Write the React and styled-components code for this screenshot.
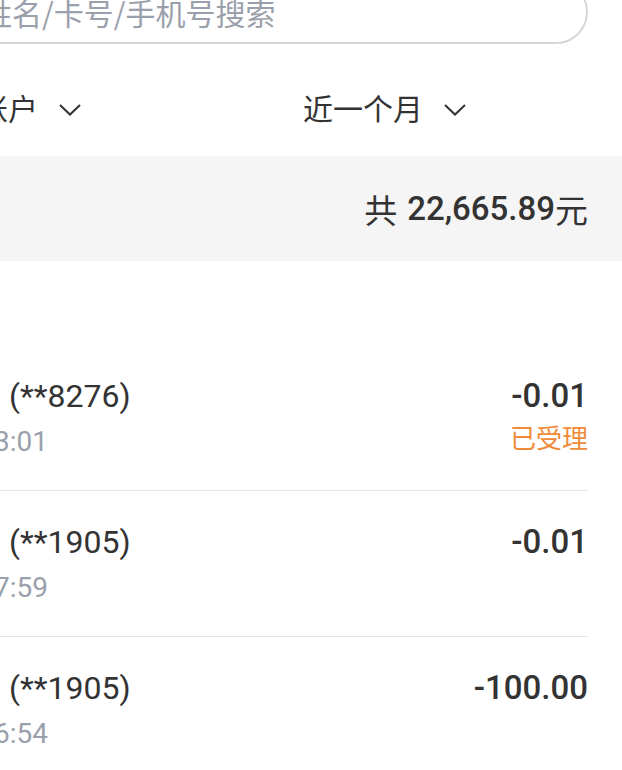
import React from "react";
import styled, { createGlobalStyle } from "styled-components";

const records = [
  { id: 1, bank: "建设银行", tail: "8276", time: "今天 14:23:01", amount: "-0.01", status: "已受理" },
  { id: 2, bank: "建设银行", tail: "1905", time: "昨天 09:17:59", amount: "-0.01" },
  { id: 3, bank: "建设银行", tail: "1905", time: "昨天 08:06:54", amount: "-100.00" },
];

const Chevron = () => (
  <ChevronIcon width="22" height="12" viewBox="0 0 22 12">
    <polyline points="1,1 11,10.5 21,1" fill="none" stroke="#333" strokeWidth="2" />
  </ChevronIcon>
);

const App = () => {
  return (
    <>
      <GlobalStyle />
      <Page>
        <SearchBox>
          <svg width="24" height="24" viewBox="0 0 24 24">
            <circle cx="10.5" cy="10.5" r="7.5" fill="none" stroke="#9aa0ab" strokeWidth="2" />
            <line x1="16" y1="16" x2="22" y2="22" stroke="#9aa0ab" strokeWidth="2" />
          </svg>
          <SearchInput placeholder="按姓名/卡号/手机号搜索" />
        </SearchBox>

        <FilterBar>
          <Filter>
            全部账户
            <Chevron />
          </Filter>
          <Filter>
            近一个月
            <Chevron />
          </Filter>
        </FilterBar>

        <Summary>
          <span>共</span>
          <Total>22,665.89</Total>
          <span>元</span>
        </Summary>

        <List>
          {records.map((r) => (
            <Row key={r.id}>
              <div>
                <Name>
                  <Bank>{r.bank}</Bank>(**{r.tail})
                </Name>
                <Time>{r.time}</Time>
              </div>
              <Right>
                <Amount>{r.amount}</Amount>
                {r.status && <Status>{r.status}</Status>}
              </Right>
            </Row>
          ))}
        </List>
      </Page>
    </>
  );
};

const GlobalStyle = createGlobalStyle`
  html, body {
    margin: 0;
    background: #ffffff;
    overflow: hidden;
  }
  body {
    font-family: Roboto, "Noto Sans CJK SC", sans-serif;
    color: #333333;
  }
`;

// the shot is a crop of a wider page, so the page runs off to the left and top
const Page = styled.div`
  margin: -20px 0 0 -157px;
  padding: 0 34px;
`;

const SearchBox = styled.div`
  box-sizing: border-box;
  height: 64px;
  display: flex;
  align-items: center;
  gap: 15px;
  padding-left: 34px;
  border: 2px solid #d3d6db;
  border-radius: 32px;
`;

const SearchInput = styled.input`
  flex: 1;
  border: none;
  outline: none;
  padding: 0;
  background: transparent;
  font-family: "Noto Sans CJK SC", sans-serif;
  font-size: 30px;

  &::placeholder {
    color: #9aa0ab;
  }
`;

const FilterBar = styled.div`
  display: grid;
  grid-template-columns: 385px auto;
  padding: 41px 0 27px 41px;
`;

const Filter = styled.div`
  display: flex;
  align-items: center;
  height: 44px;
  font-family: "Noto Sans CJK SC", sans-serif;
  font-size: 30px;
  color: #333333;
`;

const ChevronIcon = styled.svg`
  margin: 6px 0 0 21px;
`;

const Summary = styled.div`
  display: flex;
  align-items: center;
  justify-content: flex-end;
  gap: 10px;
  height: 105px;
  margin: 0 -34px;
  padding-right: 34px;
  background: #f5f5f5;
  font-size: 33px;
  color: #333333;
`;

const Total = styled.span`
  font-weight: 500;
  margin-right: -10px;
`;

const List = styled.div`
  padding-top: 84px;
`;

const Row = styled.div`
  display: flex;
  justify-content: space-between;
  padding: 29px 0 30px;
  border-bottom: 1px solid #e6e6e6;
`;

const Name = styled.div`
  height: 44px;
  font-size: 32px;
  line-height: 44px;
  color: #333333;
`;

const Bank = styled.span`
  margin-right: 12px;
  font-size: 30px;
  line-height: 1;
`;

const Time = styled.div`
  margin-top: 6px;
  font-size: 28px;
  line-height: 36px;
  color: #9aa0ab;
`;

const Right = styled.div`
  text-align: right;
`;

const Amount = styled.div`
  font-size: 33px;
  font-weight: 500;
  line-height: 44px;
  color: #333333;
`;

const Status = styled.div`
  margin-top: 3px;
  font-size: 26px;
  line-height: 36px;
  color: #f08b3a;
`;

export default App;
